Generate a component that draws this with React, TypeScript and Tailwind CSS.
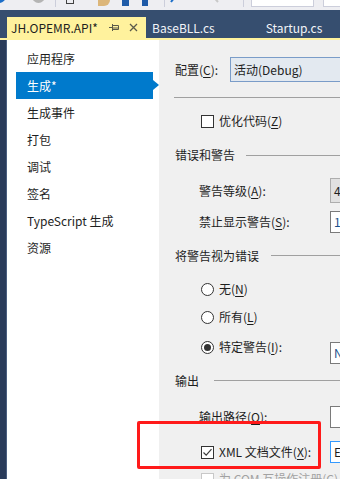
import React from "react";

const navItems = ["应用程序", "生成*", "生成事件", "打包", "调试", "签名", "TypeScript 生成", "资源"];

function K({ k }: { k: string }) {
  return <span className="underline underline-offset-2">{k}</span>;
}

function CheckBox({ checked, disabled }: { checked?: boolean; disabled?: boolean }) {
  return (
    <span
      className={`flex h-[13px] w-[13px] flex-none items-center justify-center border bg-white ${
        disabled ? "border-[#c8c8c8]" : "border-[#333333]"
      }`}
    >
      {checked && (
        <svg width="11" height="11" viewBox="0 0 11 11">
          <path d="M1.5 5.5 L4.2 8.2 L9.5 2.2" stroke="#3c3c3c" strokeWidth="1.2" fill="none" />
        </svg>
      )}
    </span>
  );
}

function Radio({ checked }: { checked?: boolean }) {
  return (
    <span className="flex h-[13px] w-[13px] flex-none items-center justify-center rounded-full border border-[#333333] bg-white">
      {checked && <span className="h-[7px] w-[7px] rounded-full bg-[#333333]" />}
    </span>
  );
}

function Header({ text, gap }: { text: string; gap: string }) {
  return (
    <div className="flex items-center pl-[16px]">
      <span>{text}</span>
      <span className={`h-px flex-1 bg-[#a0a0a0] ${gap}`} />
    </div>
  );
}

function Toolbar() {
  return (
    <div className="flex h-[10px] flex-none items-end overflow-hidden bg-[#eeeef2]">
      <span className="mb-[7px] ml-[-8px] h-[14px] w-[14px] flex-none rounded-full bg-[#1c6ec8]" />
      <span className="mb-[7px] ml-[26px] h-[13px] w-[13px] flex-none rounded-full bg-[#b4b4b4]" />
      <span className="mb-[3px] ml-[10px] h-[10px] w-px flex-none bg-[#cccedb]" />
      <span className="mb-[6px] ml-[10px] h-[12px] w-[8px] flex-none border border-[#424242]" />
      <span className="mb-[4px] ml-[24px] h-[14px] w-[12px] flex-none rounded-br-[6px] bg-[#dcb67a]" />
      <span className="mb-[4px] ml-[12px] h-[12px] w-[7px] flex-none bg-[#1e5aa8]" />
      <span className="mb-[4px] ml-[13px] h-[12px] w-[6px] flex-none bg-[#1e5aa8]" />
      <span className="mb-[3px] ml-[16px] h-[10px] w-px flex-none bg-[#cccedb]" />
      <svg className="mb-[6px] ml-[4px] flex-none" width="9" height="10" viewBox="0 0 9 10">
        <path d="M8 0 L2 8" stroke="#1c6ec8" strokeWidth="2" />
      </svg>
      <svg className="mb-[6px] ml-[31px] flex-none" width="11" height="10" viewBox="0 0 11 10">
        <path d="M2 0 L9 8" stroke="#c8c8c8" strokeWidth="2" />
      </svg>
      <span className="mb-[3px] ml-[23px] h-[10px] w-px flex-none bg-[#cccedb]" />
      <div className="mb-[3px] ml-[7px] flex h-[24px] w-[63px] flex-none items-center border border-[#cccedb] bg-white pb-[8px] pl-[4px] text-[12px] text-[#1e1e1e]">
        Debug
      </div>
      <div className="mb-[3px] ml-[9px] flex h-[24px] w-[30px] flex-none items-center border border-[#cccedb] bg-white pb-[8px] pl-[4px] text-[12px] text-[#1e1e1e]">
        Any
      </div>
    </div>
  );
}

function Tabs() {
  return (
    <div className="flex-none">
      <div className="flex h-[28px] items-end bg-[#364e6f] pl-[7px] text-[12px]">
        <div className="flex h-[21px] w-[139px] flex-none items-center bg-[#fff29d] pl-[4px] text-[#1e1e1e]">
          <span>JH.OPEMR.API*</span>
          <svg className="ml-auto" width="11" height="9" viewBox="0 0 11 9">
            <path d="M0 4.5 H3 M3.5 1 V8 M3.5 2.5 H9.5 V6.5 H3.5 M3.5 5 H9.5" stroke="#5a5a4a" strokeWidth="1" fill="none" />
          </svg>
          <svg className="ml-[9px] mr-[8px]" width="9" height="9" viewBox="0 0 9 9">
            <path d="M1 1 L8 8 M8 1 L1 8" stroke="#5a5a4a" strokeWidth="1.3" />
          </svg>
        </div>
        <div className="flex h-[21px] items-center pl-[6px] text-[#f2f4f8]">BaseBLL.cs</div>
        <div className="flex h-[21px] items-center pl-[51px] text-[#f2f4f8]">Startup.cs</div>
      </div>
      <div className="h-[2px] bg-[#fff29d]" />
    </div>
  );
}

function Sidebar() {
  return (
    <div className="w-[152px] flex-none bg-white pt-[5px]">
      {navItems.map((item) =>
        item === "生成*" ? (
          <div key={item} className="relative ml-[9px] flex h-[27px] w-[137px] items-center bg-[#007acc] pl-[11px] text-white">
            {item}
            <span className="absolute right-[-6px] top-[8px] h-0 w-0 border-y-[5px] border-l-[6px] border-y-transparent border-l-[#007acc]" />
          </div>
        ) : (
          <div key={item} className="ml-[9px] flex h-[27px] items-center pl-[11px] text-[#1e1e1e]">
            {item}
          </div>
        )
      )}
    </div>
  );
}

function Panel() {
  return (
    <div className="relative min-w-0 flex-1 overflow-hidden bg-[#f0f0f0] text-[#1e1e1e]">
      <div className="mt-[17px] flex h-[25px] items-center pl-[16px]">
        <span className="w-[55px] flex-none">
          配置(<K k="C" />):
        </span>
        <div className="flex h-[25px] w-[200px] flex-none items-center border border-[#7a9cc8] bg-[#e3e9f0] pl-[3px]">
          活动(Debug)
        </div>
      </div>
      <div className="flex h-[30px] items-center pl-[15px]">
        <span className="h-px flex-1 bg-[#a0a0a0]" />
      </div>
      <div className="flex h-[18px] items-center gap-[5px] pl-[42px]">
        <CheckBox />
        <span>
          优化代码(<K k="Z" />)
        </span>
      </div>
      <div className="flex h-[50px] flex-col justify-center">
        <Header text="错误和警告" gap="ml-[11px]" />
      </div>
      <div className="flex h-[21px] items-center pl-[40px]">
        <span className="w-[131px] flex-none">
          警告等级(<K k="A" />):
        </span>
        <div className="flex h-[25px] w-[40px] flex-none items-center border border-[#adadad] bg-[#e1e1e1] pl-[3px]">4</div>
      </div>
      <div className="flex h-[41px] items-center pl-[40px]">
        <span className="w-[131px] flex-none">
          禁止显示警告(<K k="S" />):
        </span>
        <div className="flex h-[22px] w-[40px] flex-none items-center border border-[#7a7a7a] bg-white pl-[3px] text-[#1a4f8a]">1</div>
      </div>
      <div className="flex h-[27px] flex-col justify-center">
        <Header text="将警告视为错误" gap="ml-[12px]" />
      </div>
      <div className="flex h-[40px] items-center gap-[5px] pl-[42px]">
        <Radio />
        <span>
          无(<K k="N" />)
        </span>
      </div>
      <div className="flex h-[16px] items-center gap-[5px] pl-[42px]">
        <Radio />
        <span>
          所有(<K k="L" />)
        </span>
      </div>
      <div className="flex h-[44px] items-center pl-[42px]">
        <Radio checked />
        <span className="ml-[5px] w-[111px] flex-none">
          特定警告(<K k="I" />):
        </span>
        <div className="mt-[11px] flex h-[22px] w-[40px] flex-none items-center border border-[#7a7a7a] bg-white pl-[3px] text-[#1a4f8a]">N</div>
      </div>
      <div className="flex h-[23px] flex-col justify-center">
        <Header text="输出" gap="ml-[15px]" />
      </div>
      <div className="flex h-[49px] items-center pl-[40px]">
        <span className="w-[131px] flex-none">
          输出路径(<K k="O" />):
        </span>
        <div className="flex h-[22px] w-[40px] flex-none items-center border border-[#7a7a7a] bg-white" />
      </div>
      <div className="flex h-[22px] items-center pl-[42px]">
        <CheckBox checked />
        <span className="ml-[5px] w-[111px] flex-none">
          XML 文档文件(<K k="X" />):
        </span>
        <div className="flex h-[22px] w-[40px] flex-none items-center border border-[#3399ff] bg-white pl-[3px]">E</div>
      </div>
      <div className="flex h-[32px] items-center gap-[5px] pl-[42px] text-[#a2a2a2]">
        <CheckBox disabled />
        <span>
          为 COM 互操作注册(<K k="C" />)
        </span>
      </div>
    </div>
  );
}

export default function App() {
  return (
    <div className="relative flex h-[479px] w-[340px] flex-col overflow-hidden bg-[#2a3b5a] font-['Noto_Sans_CJK_SC','Noto_Sans',sans-serif] text-[12px] leading-none">
      <Toolbar />
      <Tabs />
      <div className="flex min-h-0 flex-1">
        <div className="w-[7px] flex-none border-r border-[#4b5f80] bg-[#2a3b5a]" />
        <Sidebar />
        <Panel />
      </div>
      <div className="pointer-events-none absolute left-[137px] top-[421px] h-[48px] w-[184px] rounded-[2px] border-[3px] border-[#ff1a1a]" />
    </div>
  );
}
